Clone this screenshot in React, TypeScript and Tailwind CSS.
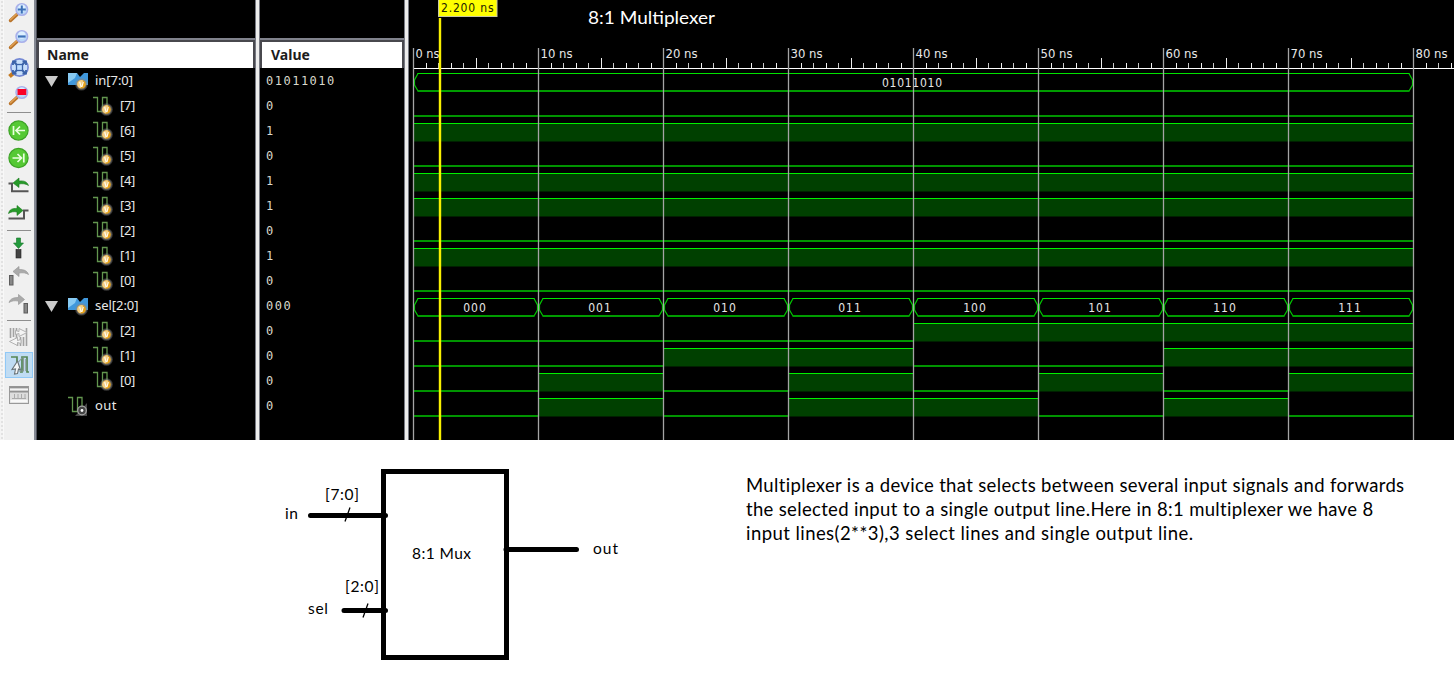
import type { ReactNode } from "react";

type Signal = {
  name: string;
  value: string;
  kind: "bus" | "bit" | "out";
  segments: string[];
};

const SIGNALS: Signal[] = [
  { name: "in[7:0]", value: "01011010", kind: "bus", segments: ["01011010"] },
  { name: "[7]", value: "0", kind: "bit", segments: ["0"] },
  { name: "[6]", value: "1", kind: "bit", segments: ["1"] },
  { name: "[5]", value: "0", kind: "bit", segments: ["0"] },
  { name: "[4]", value: "1", kind: "bit", segments: ["1"] },
  { name: "[3]", value: "1", kind: "bit", segments: ["1"] },
  { name: "[2]", value: "0", kind: "bit", segments: ["0"] },
  { name: "[1]", value: "1", kind: "bit", segments: ["1"] },
  { name: "[0]", value: "0", kind: "bit", segments: ["0"] },
  { name: "sel[2:0]", value: "000", kind: "bus", segments: ["000", "001", "010", "011", "100", "101", "110", "111"] },
  { name: "[2]", value: "0", kind: "bit", segments: "00001111".split("") },
  { name: "[1]", value: "0", kind: "bit", segments: "00110011".split("") },
  { name: "[0]", value: "0", kind: "bit", segments: "01010101".split("") },
  { name: "out", value: "0", kind: "out", segments: "01011010".split("") },
];

const UI = "font-['Noto_Sans','Open_Sans',sans-serif]";
const CALIBRI = "font-['Lato',sans-serif]";
const WAVE = "font-['DejaVu_Sans_Condensed','DejaVu_Sans',sans-serif] text-[12px]";

function Tool({ h, selected, children }: { h: string; selected?: boolean; children: ReactNode }) {
  return (
    <div className={`flex w-[28px] shrink-0 items-center justify-center ${h} ${selected ? "border border-[#90c8f6] bg-[#c0dcf3]" : ""}`}>
      <svg width="24" height="24" viewBox="0 0 24 24" className="shrink-0">{children}</svg>
    </div>
  );
}

function Separator({ h }: { h: string }) {
  return (
    <div className={`flex w-[24px] shrink-0 items-center ${h}`}>
      <div className="h-px w-full bg-[#8e8e8e]" />
    </div>
  );
}

function Lens({ children }: { children: ReactNode }) {
  return (
    <>
      <path d="M3.5 19.500 L10 13.500" stroke="#b8732a" strokeWidth="3.400" strokeLinecap="round" />
      <path d="M3.5 18.800 L9.4 13.300" stroke="#e0a052" strokeWidth="1.4" strokeLinecap="round" />
      <circle cx="14.8" cy="8.500" r="5.800" fill="#bcd9f8" stroke="#a9b0ea" strokeWidth="1.5" />
      <circle cx="14.8" cy="7.100" r="3.6" fill="#def0ff" />
      {children}
    </>
  );
}

function Toolbar() {
  return (
    <aside className="flex h-full w-[37px] shrink-0 bg-[#f0f0f0]">
      <div className="w-[4px] shrink-0 border-r border-[#f8f8f8] bg-[#f4f4f4] bg-[radial-gradient(#e2e2e2_1px,transparent_1px)] bg-[length:4px_4px]" />
      <div className="flex min-w-0 flex-1 flex-col items-center">
        <Tool h="h-[25px]">
          <Lens><path d="M10.8 8.500h8M14.8 4.500v8" stroke="#3c70b8" strokeWidth="2" /></Lens>
        </Tool>
        <Tool h="h-[29px]">
          <Lens><path d="M11 8.500h7.600" stroke="#3c70b8" strokeWidth="2.200" /></Lens>
        </Tool>
        <Tool h="h-[28px]">
          <path d="M2.500 20.500 L6 17.500" stroke="#c47a22" strokeWidth="4" />
          <circle cx="12.500" cy="11.500" r="8.600" fill="#c7defa" stroke="#7488d4" strokeWidth="1.600" />
          <path d="M6.500 5.500l12 12M18.500 5.500l-12 12" stroke="#3a62a8" strokeWidth="1.800" />
          <path d="M6 9V5.500h3.500M15.500 5.500h3.500V9M6 14v3.500h3.500M15.500 17.500h3.500V14" fill="none" stroke="#3a62a8" strokeWidth="1.800" />
          <rect x="9.500" y="8.500" width="6" height="6" fill="#bcdcff" stroke="#3a62a8" strokeWidth="1.300" />
        </Tool>
        <Tool h="h-[27px]">
          <Lens><rect x="10.500" y="5" width="8.800" height="6" fill="#fa0026" /></Lens>
        </Tool>
        <Separator h="h-[6px]" />
        <Tool h="h-[30px]">
          <circle cx="11.500" cy="12.500" r="9.600" fill="#55c934" stroke="#3da326" strokeWidth="1.200" />
          <path d="M6.500 8v9M18 12.500H9M13 8.500l-4 4 4 4" fill="none" stroke="#eaffdf" strokeWidth="1.700" />
        </Tool>
        <Tool h="h-[26px]">
          <circle cx="11.500" cy="12" r="9.600" fill="#55c934" stroke="#3da326" strokeWidth="1.200" />
          <path d="M16.800 7.500v9M5.500 12h9M10.500 8l4 4-4 4" fill="none" stroke="#eaffdf" strokeWidth="1.700" />
        </Tool>
        <Tool h="h-[28px]">
          <path d="M1.500 10.500h3.500v7.700h16.500" fill="none" stroke="#555" strokeWidth="2" />
          <path d="M6 10l6-5v3c5-.5 8 .5 9.500 4.500-3-2-6-2-9.500-1.500v3.500z" fill="#269a29" stroke="#197a1d" strokeWidth=".6" />
        </Tool>
        <Tool h="h-[28px]">
          <path d="M1.500 17.500h15.500v-8h4.500" fill="none" stroke="#555" strokeWidth="2" />
          <path d="M16 9.500l-6-5v3c-5-.3-7.500 1-8.500 5 3-2 5-2 8.500-1.500v3.500z" fill="#269a29" stroke="#197a1d" strokeWidth=".6" />
        </Tool>
        <Separator h="h-[6px]" />
        <Tool h="h-[30px]">
          <path d="M9.500 2h4v5H16.500l-5 5.500L6.500 7h3z" fill="#239a3c" stroke="#147427" strokeWidth=".6" />
          <rect x="9" y="13.500" width="5" height="8.500" fill="#444" stroke="#222" strokeWidth=".6" />
        </Tool>
        <Tool h="h-[28px]">
          <path d="M6 6.500l6-5v3c5 0 8 1 9.500 5-3-1.800-5-2-9.500-1.500v3.500z" fill="#aaa" stroke="#999" strokeWidth=".7" />
          <rect x="2.500" y="10.500" width="3.500" height="9.500" fill="#888" stroke="#5c5c5c" />
        </Tool>
        <Tool h="h-[27px]">
          <path d="M17.500 6.500l-6-5v3c-5 0-8 1-9.500 5 3-1.800 5-2 9.500-1.500v3.500z" fill="#aaa" stroke="#999" strokeWidth=".7" />
          <rect x="17" y="10.500" width="3.500" height="9.500" fill="#888" stroke="#5c5c5c" />
        </Tool>
        <Separator h="h-[4px]" />
        <Tool h="h-[30px]">
          <path d="M3.500 3v10M6.500 3v9M9.500 3v11M19.500 3v18M16.500 12v9M13.500 12v9M10.500 15v6" stroke="#a2a2a2" strokeWidth="1.600" />
          <path d="M8.500 5.500l3.500 1V3.500l8 4-8 4V8.500l-3.500 1zM14 14.500l-3.500 1v-3l-8 4 8 4v-3l3.500 1z" fill="#f4f4f4" stroke="#aaa" strokeWidth=".9" />
        </Tool>
        <Tool h="h-[26px]" selected>
          <path d="M4 4h6v5M13 19h2V4h5v15h2" fill="none" stroke="#558654" strokeWidth="1.700" />
          <path d="M11.500 9l4-4.500M16.500 5v13h-5M18.800 6v12" fill="none" stroke="#8a9b96" strokeWidth="1.100" />
          <path d="M10.500 8L5 16.500l3.500-.5-1 5 3-.5 1-4.500 2 1z" fill="#f5f7f8" stroke="#697277" strokeWidth="1.100" />
        </Tool>
        <Tool h="h-[34px]">
          <rect x="2.500" y="3.500" width="19" height="17" fill="#ddd" stroke="#999" />
          <path d="M3 4.500h18M3 8.500h18" stroke="#929292" strokeWidth="1.800" />
          <path d="M3 6.500h18" stroke="#f4f4f4" strokeWidth="1.800" />
          <path d="M7.500 11v4M11 11v4M14.500 11v4M18 11v4M5 15.500h14" fill="none" stroke="#aaa" />
          <path d="M3.500 18h17" stroke="#f8f8f8" strokeWidth="2.400" />
        </Tool>
      </div>
      <div className="w-[3px] shrink-0 border-r border-[#4c4e58] bg-[#858993]" />
    </aside>
  );
}

function Badge({ x, y }: { x: number; y: number }) {
  return (
    <>
      <circle cx={x} cy={y} r="6.300" fill="#8c8a86" opacity=".4" />
      <circle cx={x} cy={y} r="5.200" fill="#8c8a86" opacity=".6" />
      <circle cx={x} cy={y} r="4.300" fill="#e5a11c" />
      <path d={`M${x - 4.300} ${y}a4.300 4.300 0 0 1 6-3.900l-2.500 7.800a4.300 4.300 0 0 1 -3.500-3.900`} fill="#f3cf86" />
      <path d={`M${x - 1.800} ${y - 2.500}l1.300 4.700h1l1.300-4.700`} fill="none" stroke="#fffbee" strokeWidth="1.200" />
    </>
  );
}

function SignalIcon({ kind }: { kind: Signal["kind"] }) {
  return (
    <svg width="22" height="22" viewBox="0 0 22 22" className="shrink-0">
      {kind === "bus" ? (
        <>
          <path d="M1 3h9l3 4 4-4h4v12H1z" fill="#4098dc" />
          <path d="M1 3h9l-2 5-7 5z" fill="#88caf2" />
          <Badge x={14.500} y={14.300} />
        </>
      ) : (
        <>
          <path d="M1 2.500h4.500v14h5V2.500h4.500v10" fill="none" stroke="#63964f" strokeWidth="1.300" />
          {kind === "bit" ? (
            <Badge x={14.500} y={14.500} />
          ) : (
            <>
              <path d="M20 8v13H8z" fill="#777" opacity=".6" />
              <circle cx="15" cy="15.500" r="4.300" fill="#444" stroke="#a4a4a4" strokeWidth="1.200" />
              <circle cx="15" cy="15.500" r="1.400" fill="#fff" />
            </>
          )}
        </>
      )}
    </svg>
  );
}

function HeaderCell({ title, pad }: { title: string; pad: string }) {
  return (
    <div className="h-[30px] shrink-0 border-t-2 border-[#80828c]">
      <div className="h-[28px] border-2 border-b-0 border-[#48484e] bg-white">
        <p className={`text-[14px] leading-[26px] font-bold text-[#1c1c1c] ${pad} ${UI}`}>{title}</p>
      </div>
    </div>
  );
}

function Splitter() {
  return <div className="w-[5px] shrink-0 border-x border-[#777982] bg-[#ededed]" />;
}

function NamePanel() {
  return (
    <section className="flex w-[218px] shrink-0 flex-col pt-[38px]">
      <HeaderCell title="Name" pad="pl-[8px]" />
      {SIGNALS.map((s, i) => (
        <div key={i} className={`flex h-[25px] shrink-0 items-center text-[13px] text-[#e8e8e8] ${UI} ${s.kind === "bus" ? "pl-[8px]" : s.kind === "out" ? "pl-[30px]" : "pl-[55px]"}`}>
          {s.kind === "bus" && (
            <svg width="13" height="12" viewBox="0 0 13 12" className="mr-[9px] shrink-0">
              <path d="M0 1h13L6.500 12z" fill="#cacaca" />
            </svg>
          )}
          <SignalIcon kind={s.kind} />
          <span className={`pb-px leading-[24px] ${s.kind === "bit" ? "pl-[6px] tracking-[-0.4px]" : s.kind === "out" ? "pl-[6px] tracking-[0.4px]" : "pl-[6px] tracking-[-0.05px]"}`}>{s.name}</span>
        </div>
      ))}
    </section>
  );
}

function ValuePanel() {
  return (
    <section className="flex w-[144px] shrink-0 flex-col pt-[38px]">
      <HeaderCell title="Value" pad="pl-[9px]" />
      {SIGNALS.map((s, i) => (
        <div key={i} className="h-[25px] shrink-0 pl-[6px] font-['DejaVu_Sans_Mono',monospace] text-[12px] leading-[27px] tracking-[1.5px] text-[#d8d8cc]">
          {s.value}
        </div>
      ))}
    </section>
  );
}

const X0 = 4.500;
const PERIOD = 125;

function Trace({ signal, index }: { signal: Signal; index: number }) {
  const mid = 80 + index * 25;
  const width = (PERIOD * 8) / signal.segments.length;
  return (
    <g>
      {signal.segments.map((v, i) => {
        const a = X0 + i * width;
        const b = a + width;
        if (signal.kind === "bus") {
          const tx = signal.segments.length === 1 ? 503 : a + 61;
          const len = v.length === 3 ? 22.500 : 60;
          return (
            <g key={i}>
              <path d={`M${a + 4.500} ${mid + 11}l-3.500-6v-5l3.500-6.500M${b - 4.500} ${mid + 11}l3.500-6v-5l-3.500-6.500`} fill="none" stroke="#00c800" strokeWidth="1.200" />
              <path d={`M${a + 4} ${mid - 6.500}H${b - 4}`} stroke="#00e400" />
              <path d={`M${a + 4} ${mid + 11}H${b - 4}`} stroke="#009c00" strokeWidth="2" />
              <text x={tx} y={mid + 6.500} textAnchor="middle" textLength={len} className={`fill-[#e6e6e6] ${WAVE}`}>{v}</text>
            </g>
          );
        }
        return v === "1" ? (
          <g key={i}>
            <rect x={a} y={mid - 7} width={width} height="18.500" fill="#004000" />
            <path d={`M${a} ${mid - 6.500}H${b}`} stroke="#00f000" />
          </g>
        ) : (
          <path key={i} d={`M${a} ${mid + 11}H${b}`} stroke="#009400" strokeWidth="2" />
        );
      })}
    </g>
  );
}

function Waveform() {
  const ticks = Array.from({ length: 84 }, (_, i) => i);
  return (
    <section className="min-w-0 flex-1">
      <svg width="1045" height="440" viewBox="0 0 1045 440" className="block">
        {SIGNALS.map((s, i) => <Trace key={i} signal={s} index={i} />)}
        {ticks.map((i) => (
          <path key={i} d={`M${Math.floor(X0 + i * 12.500) + 0.500} ${i % 10 === 5 ? 58 : 63}V69`} stroke={i % 2 ? "#eee" : "#c8c8c8"} />
        ))}
        <path d="M4 68.500H1045" stroke="#fff" />
        {Array.from({ length: 9 }, (_, i) => (
          <g key={i}>
            <path d={`M${X0 + i * PERIOD} 48V440`} stroke="#a4a4a4" strokeWidth="1.300" />
            <text x={X0 + i * PERIOD + 2} y="57.500" textLength={i ? 32 : 24} lengthAdjust="spacingAndGlyphs" className={`fill-[#e8e8e8] ${WAVE}`}>{i * 10} ns</text>
          </g>
        ))}
        <path d="M31 18V440" stroke="#f8f000" strokeWidth="2.400" />
        <rect x="29.500" y="-1" width="58.500" height="17.500" fill="#ffff00" stroke="#c8c8a0" />
        <text x="32" y="11.500" textLength="52.500" className={`fill-[#222200] ${WAVE}`}>2.200 ns</text>
        <text x="179" y="24" textLength="127" lengthAdjust="spacingAndGlyphs" className="fill-white font-['Lato',sans-serif] text-[17.5px]">8:1 Multiplexer</text>
      </svg>
    </section>
  );
}

function Diagram() {
  return (
    <svg width="746" height="248" viewBox="0 440 746 248" className={`shrink-0 text-[15.5px] ${CALIBRI}`}>
      <rect x="383.500" y="471.500" width="123" height="186" fill="none" stroke="#000" strokeWidth="5" />
      <path d="M310.500 515.500H385.500M344 610.500H385.500M506 549.500H576.500" stroke="#000" strokeWidth="5" strokeLinecap="round" />
      <path d="M350 507.500l-5 14M368 603.500l-5 14" stroke="#000" strokeWidth="1.300" />
      <text x="285" y="519" textLength="13">in</text>
      <text x="308" y="614" textLength="20">sel</text>
      <text x="325" y="500" textLength="34">[7:0]</text>
      <text x="345" y="592" textLength="34">[2:0]</text>
      <text x="412" y="559" textLength="59">8:1 Mux</text>
      <text x="593" y="554" textLength="25">out</text>
    </svg>
  );
}

export default function App() {
  return (
    <main className="flex h-[688px] w-[1454px] flex-col overflow-hidden bg-white">
      <div className="flex h-[440px] shrink-0 bg-black">
        <Toolbar />
        <NamePanel />
        <Splitter />
        <ValuePanel />
        <Splitter />
        <Waveform />
      </div>
      <div className="flex h-[248px] shrink-0">
        <Diagram />
        <p className={`pt-[33px] text-[18.5px] leading-[24px] whitespace-nowrap text-black ${CALIBRI}`}>
          <span className="block tracking-[0.34px]">Multiplexer is a device that selects between several input signals and forwards</span>
          <span className="block tracking-[0.33px]">the selected input to a single output line.Here in 8:1 multiplexer we have 8</span>
          <span className="block tracking-[0.44px]">input lines(2**3),3 select lines and single output line.</span>
        </p>
      </div>
    </main>
  );
}
